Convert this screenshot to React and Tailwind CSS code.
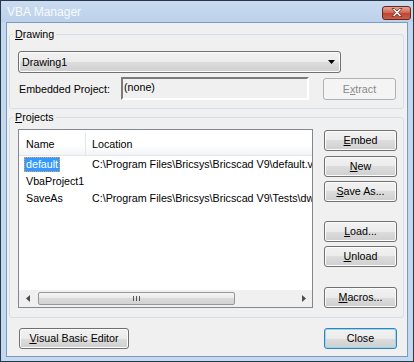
import React from 'react';

const btnBase =
  'flex items-center justify-center h-[21px] rounded-[3px] border text-[10.7px] leading-none whitespace-nowrap';
const btnNormal =
  'border-[#707070] text-black bg-[linear-gradient(#f2f2f2,#ebebeb_50%,#dddddd_50%,#cfcfcf)] shadow-[inset_0_0_0_1px_#fcfcfc]';
const btnPrimary =
  'border-[#3c7fb1] text-black bg-[linear-gradient(#f2f2f2,#ebebeb_50%,#dddddd_50%,#cfcfcf)] shadow-[inset_0_0_0_1px_#8fdcf8]';
const btnDisabled = 'border-[#adb2b5] text-[#8a8a8a] bg-[#f4f4f4]';

const Key = ({ children }) => <span className="underline underline-offset-[1px]">{children}</span>;

const Button = ({ children, className = '', variant = 'normal' }) => {
  const look = variant === 'primary' ? btnPrimary : variant === 'disabled' ? btnDisabled : btnNormal;
  return <div className={`${btnBase} ${look} ${className}`}>{children}</div>;
};

const Group = ({ label, children, className = '' }) => (
  <fieldset className={`border border-[#d5dfe5] rounded-[3px] p-0 ${className}`}>
    <legend className="ml-[3px] px-[2px] text-[10.7px] leading-[13px]">{label}</legend>
    {children}
  </fieldset>
);

const ArrowDown = () => (
  <svg width="7" height="4" viewBox="0 0 7 4">
    <path d="M0 0h7L3.5 4z" fill="#000" />
  </svg>
);

const ArrowSide = ({ dir }) => (
  <svg width="4" height="7" viewBox="0 0 4 7">
    <path d={dir === 'left' ? 'M4 0v7L0 3.5z' : 'M0 0v7L4 3.5z'} fill="#4d4d4d" />
  </svg>
);

const projects = [
  { name: 'default', location: 'C:\\Program Files\\Bricsys\\Bricscad V9\\default.vba', selected: true },
  { name: 'VbaProject1', location: '' },
  { name: 'SaveAs', location: 'C:\\Program Files\\Bricsys\\Bricscad V9\\Tests\\dwg\\SaveAs.dvb' },
];

const ProjectList = () => (
  <div className="w-[295px] h-[179px] border border-[#828790] bg-white flex flex-col">
    {/* header */}
    <div className="h-[26px] pt-[3px] flex border-b border-[#e5e5e5] bg-[linear-gradient(#ffffff,#ffffff_60%,#f3f4f6)] shrink-0">
      <div className="w-[67px] pl-[7px] flex items-center border-r border-[#e3e8ee]">Name</div>
      <div className="pl-[6px] flex items-center">Location</div>
    </div>
    {/* rows */}
    <div className="flex-1 flex flex-col overflow-hidden">
      {projects.map((p) => (
        <div key={p.name} className="h-[17px] flex items-center shrink-0">
          <div className="w-[68px] pl-[5px] shrink-0 flex">
            {p.selected ? (
              <span className="inline-flex items-center h-[15px] px-[1px] bg-[#3399ff] text-white border border-dotted border-[#e8a060]">
                {p.name}
              </span>
            ) : (
              <span className="pl-[2px]">{p.name}</span>
            )}
          </div>
          <div className="pl-[5px] whitespace-nowrap overflow-hidden">{p.location}</div>
        </div>
      ))}
    </div>
    {/* horizontal scrollbar */}
    <div className="h-[17px] flex items-center bg-[#f0f0f0] shrink-0">
      <div className="w-[17px] h-full flex items-center justify-center">
        <ArrowSide dir="left" />
      </div>
      <div className="ml-[2px] w-[197px] h-[13px] rounded-[2px] border border-[#979797] bg-[linear-gradient(#f4f4f4,#e9e9e9_50%,#dadada_50%,#d2d2d2)] flex items-center justify-center gap-[2px]">
        <span className="w-px h-[5px] bg-[#555]" />
        <span className="w-px h-[5px] bg-[#555]" />
        <span className="w-px h-[5px] bg-[#555]" />
      </div>
      <div className="flex-1" />
      <div className="w-[17px] h-full flex items-center justify-center">
        <ArrowSide dir="right" />
      </div>
    </div>
  </div>
);

export default function App() {
  return (
    <div className="w-[414px] h-[362px] flex flex-col border border-[#27384c] bg-[#c4d8ee] font-['Liberation_Sans',Arial,sans-serif] text-[10.7px] text-black select-none">
      {/* title bar */}
      <div className="h-[21px] flex items-center justify-between pl-[6px] pr-[2px] bg-[linear-gradient(#c9dbf0,#bcd1ea)] shrink-0">
        <span className="text-[12px] text-[#f7f9fc]">VBA Manager</span>
        <div className="w-[29px] h-[14px] mt-[2px] rounded-[3px] border border-[#6b2418] bg-[linear-gradient(#e4a79c,#d06a58_45%,#c0452f_55%,#c9614c)] flex items-center justify-center">
          <svg width="12" height="9" viewBox="0 0 12 9">
            <path
              d="M1 0.5h2.5L6 3l2.5-2.5H11L7.5 4.5 11 8.5H8.5L6 6 3.5 8.5H1l3.5-4z"
              fill="#fff"
              stroke="#6b2a20"
              strokeWidth="0.8"
            />
          </svg>
        </div>
      </div>

      {/* body */}
      <div className="flex-1 mx-[5px] mb-[4px] border border-[#7a9cc4] bg-[#f0f0f0] flex flex-col">
        <Group label={<><Key>D</Key>rawing</>} className="mt-[5px] ml-[2px] mr-[3px]">
          <div className="pt-[10px] pb-[8px] pl-[8px]">
            <div className="w-[323px] h-[22px] rounded-[3px] border border-[#707070] bg-[linear-gradient(#f2f2f2,#ebebeb_50%,#dddddd_50%,#cfcfcf)] shadow-[inset_0_0_0_1px_#fcfcfc] flex items-center justify-between pl-[3px] pr-[5px]">
              <span>Drawing1</span>
              <ArrowDown />
            </div>
            <div className="mt-[4px] flex items-center">
              <span className="w-[103px] pl-[1px] pt-[1px]">Embedded Project:</span>
              <div className="w-[188px] h-[23px] border-2 border-t-[#7b7b7b] border-l-[#7b7b7b] border-b-white border-r-white bg-[#f0f0f0] flex items-center pl-[1px] pb-[2px]">
                (none)
              </div>
              <Button variant="disabled" className="ml-[14px] w-[73px] h-[22px] mt-[1px]">
                E<Key>x</Key>tract
              </Button>
            </div>
          </div>
        </Group>

        <Group label={<><Key>P</Key>rojects</>} className="mt-[2px] ml-[2px] mr-[3px]">
          <div className="pt-[5px] pb-[9px] pl-[8px] flex">
            <ProjectList />
            <div className="ml-[11px] w-[73px] flex flex-col">
              <Button className="mt-[1px]"><Key>E</Key>mbed</Button>
              <Button className="mt-[5px]"><Key>N</Key>ew</Button>
              <Button className="mt-[4px]"><span><Key>S</Key>ave As...</span></Button>
              <Button className="mt-[19px]"><Key>L</Key>oad...</Button>
              <Button className="mt-[4px]"><Key>U</Key>nload</Button>
              <Button className="mt-[20px]"><Key>M</Key>acros...</Button>
            </div>
          </div>
        </Group>

        <div className="mt-[10px] flex justify-between pl-[12px] pr-[10px]">
          <Button className="w-[110px]"><Key>V</Key>isual Basic Editor</Button>
          <Button variant="primary" className="w-[73px]">Close</Button>
        </div>
      </div>
    </div>
  );
}
